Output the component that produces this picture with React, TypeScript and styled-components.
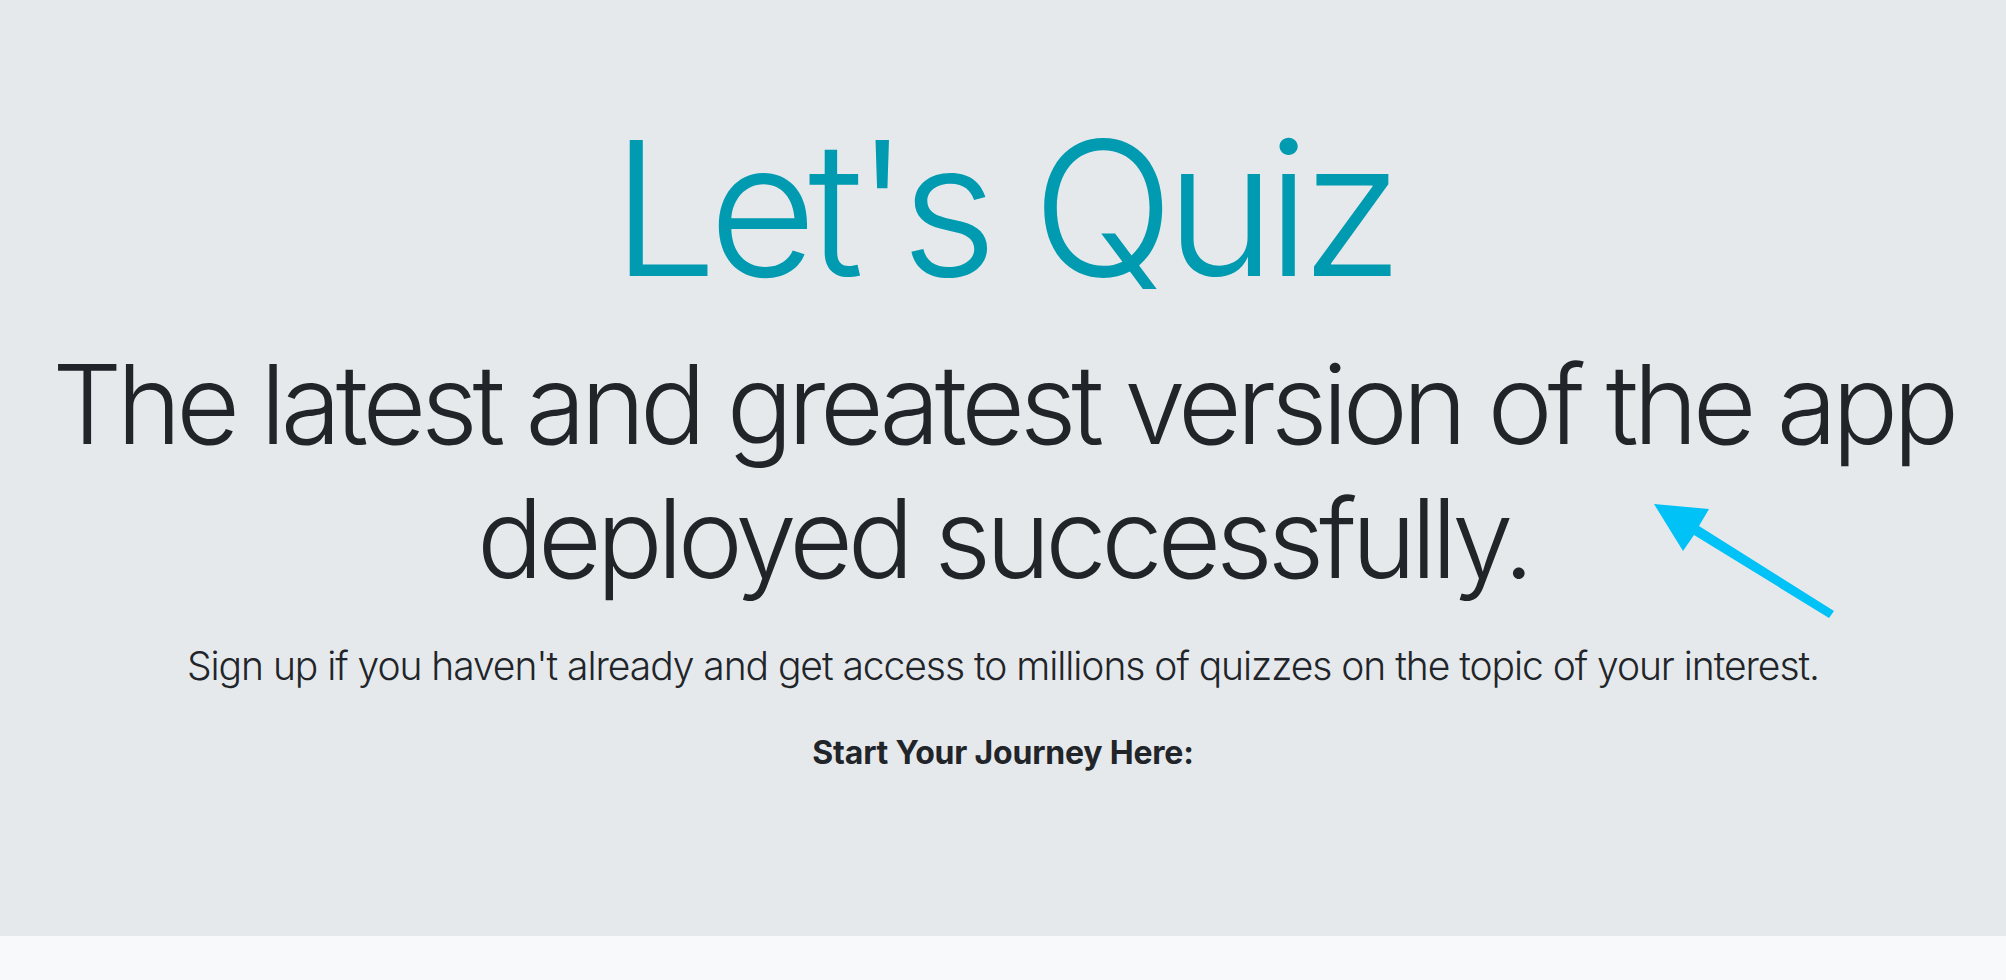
import React from "react";
import styled, { createGlobalStyle } from "styled-components";

const GlobalStyle = createGlobalStyle`
	html,
	body {
		margin: 0;
		padding: 0;
		background: #f8f9fa;
		font-family: Inter, "Noto Sans", "Liberation Sans", sans-serif;
		color: #212529;
	}
`;

const Page = styled.div`
	min-height: 100vh;
	background: #f8f9fa;
`;

const Hero = styled.section`
	position: relative;
	box-sizing: border-box;
	height: 936px;
	padding: 96px 28px 0;
	background: #e6e9ec;
	text-align: center;
`;

const Title = styled.h1`
	margin: 0;
	font-size: 187px;
	font-weight: 300;
	line-height: 224px;
	letter-spacing: -8.8px;
	color: #009bb0;
`;

const Headline = styled.h2`
	margin: 17px 0 0;
	font-size: 110px;
	font-weight: 300;
	line-height: 134px;
	letter-spacing: -5.3px;
	color: #212529;
`;

const Lead = styled.p`
	margin: 32px 0 0;
	font-size: 39px;
	font-weight: 300;
	line-height: 58px;
	letter-spacing: -1.05px;
`;

const Callout = styled.p`
	margin: 34px 0 0;
	font-size: 32px;
	font-weight: 700;
	line-height: 48px;
	letter-spacing: -0.2px;
`;

const Pointer = styled.svg`
	position: absolute;
	left: 1640px;
	top: 495px;
	width: 210px;
	height: 135px;
	overflow: visible;
`;

const Arrow = () => (
	<Pointer viewBox="0 0 210 135" aria-hidden="true">
		<polygon
			points="14,9 69,14 59,31 194,116 189,123 54,40 43,56"
			fill="#00c2f7"
		/>
	</Pointer>
);

const App = () => {
	return (
		<Page>
			<GlobalStyle />
			<Hero>
				<Title>Let's Quiz</Title>
				<Headline>
					The latest and greatest version of the app
					<br />
					deployed successfully.
				</Headline>
				<Lead>
					Sign up if you haven't already and get access to millions of
					quizzes on the topic of your interest.
				</Lead>
				<Callout>Start Your Journey Here:</Callout>
				<Arrow />
			</Hero>
		</Page>
	);
};

export default App;
